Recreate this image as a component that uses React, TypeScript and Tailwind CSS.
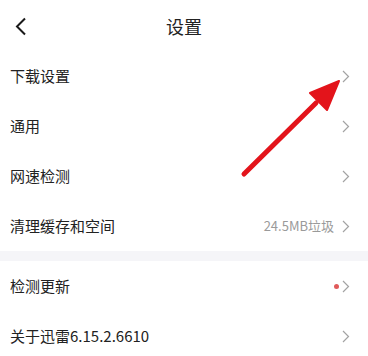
import React from 'react';

type Row = {
  label: string;
  extra?: string;
  dot?: boolean;
};

const groupA: Row[] = [
  { label: '下载设置' },
  { label: '通用' },
  { label: '网速检测' },
  { label: '清理缓存和空间', extra: '24.5MB垃圾' },
];

const groupB: Row[] = [
  { label: '检测更新', dot: true },
  { label: '关于迅雷6.15.2.6610' },
];

function Chevron() {
  return (
    <svg width="8" height="13" viewBox="0 0 8 13" className="shrink-0">
      <path d="M1 1 L6.5 6.5 L1 12" fill="none" stroke="#a3a3a3" strokeWidth="1.2" />
    </svg>
  );
}

function SettingRow({ row }: { row: Row }) {
  return (
    <div className="h-[50px] flex items-center pl-[10px] pr-[18px] bg-white">
      <span className="flex-1 text-[15px] text-[#222]">{row.label}</span>
      {row.extra && <span className="text-[13px] text-[#9a9a9a] mr-[8px]">{row.extra}</span>}
      {row.dot && <span className="w-[5px] h-[5px] rounded-full bg-[#e05a5a] mr-[3px]" />}
      <Chevron />
    </div>
  );
}

export default function App() {
  return (
    <div
      className="relative w-[368px] h-[356px] overflow-hidden bg-white"
      style={{ fontFamily: '"Noto Sans CJK SC", "Noto Sans", sans-serif' }}
    >
      {/* header */}
      <div className="relative h-[51px] flex items-center justify-center">
        <svg width="14" height="20" viewBox="0 0 14 20" className="absolute left-[14px] top-[17px]">
          <path d="M11 1.5 L3 9.5 L11 17.5" fill="none" stroke="#1a1a1a" strokeWidth="2" />
        </svg>
        <span className="text-[18px] text-[#222] mt-[1px]">设置</span>
      </div>

      {groupA.map((r) => (
        <SettingRow key={r.label} row={r} />
      ))}
      <div className="h-[10px] bg-[#f5f5f8]" />
      {groupB.map((r) => (
        <SettingRow key={r.label} row={r} />
      ))}

      {/* annotation arrow */}
      <svg
        width="368"
        height="356"
        viewBox="0 0 368 356"
        className="absolute inset-0 pointer-events-none"
      >
        <line x1="244" y1="174" x2="316" y2="103" stroke="#e3141b" strokeWidth="5" strokeLinecap="round" />
        <polygon points="339,81 310,93 327,110" fill="#e3141b" stroke="#e3141b" strokeWidth="2" strokeLinejoin="round" />
      </svg>
    </div>
  );
}
